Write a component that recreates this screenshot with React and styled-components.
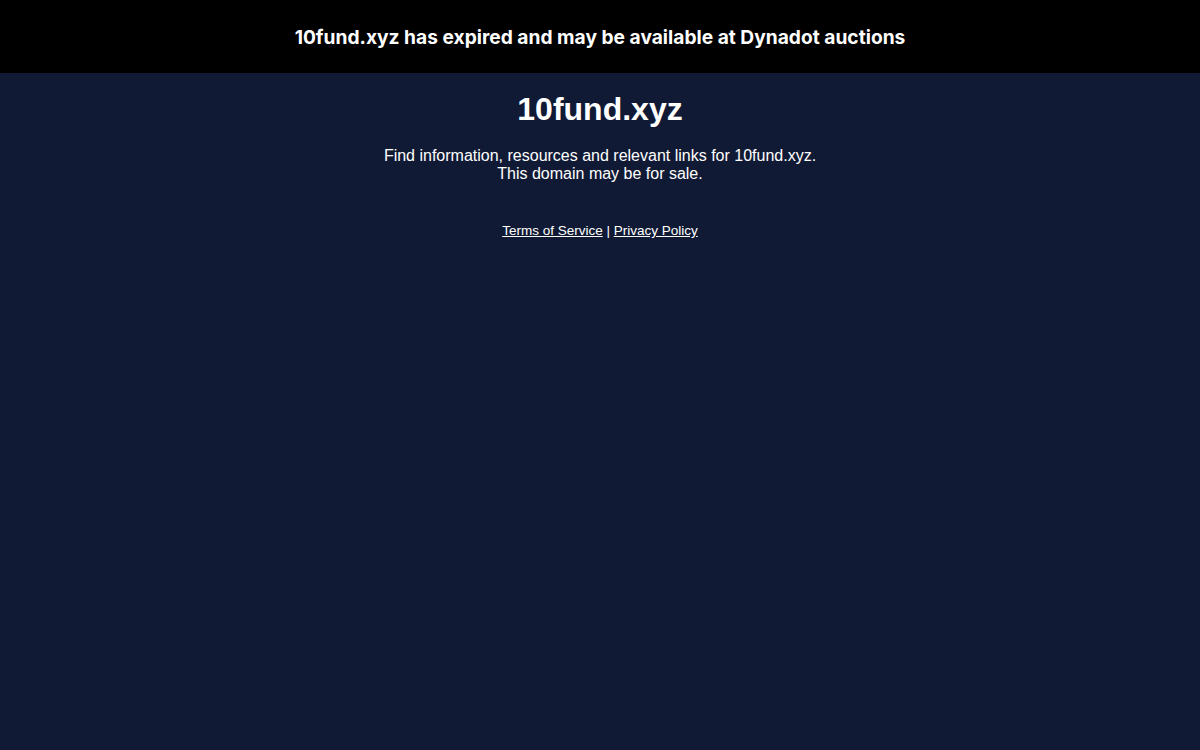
import styled, { createGlobalStyle } from "styled-components"

const GlobalStyle = createGlobalStyle`
  html, body {
    margin: 0;
    padding: 0;
    height: 100%;
    background: #111a35;
  }
  #root {
    min-height: 100vh;
  }
`

const Page = styled.div`
  min-height: 100vh;
  background: #111a35;
  color: #fff;
  font-family: "Liberation Sans", Arial, sans-serif;
  text-align: center;
`

const Banner = styled.header`
  height: 73px;
  padding-top: 1px;
  box-sizing: border-box;
  background: #000;
  display: flex;
  align-items: center;
  justify-content: center;
  font-family: Inter, "Liberation Sans", sans-serif;
  font-weight: 700;
  font-size: 19.2px;
`

const Content = styled.main`
  display: flex;
  flex-direction: column;
  align-items: center;
  padding-top: 16px;
`

const Title = styled.h1`
  margin: 0;
  font-size: 32px;
  line-height: 40px;
  font-weight: 700;
`

const Lead = styled.p`
  margin: 18px 0 0;
  font-size: 16px;
  line-height: 18px;
`

const Footer = styled.div`
  margin-top: 40px;
  font-size: 13.5px;
  line-height: 16px;

  a {
    color: #fff;
    text-decoration: underline;
  }
`

const App = () => {
  return (
    <Page>
      <GlobalStyle />
      <Banner>10fund.xyz has expired and may be available at Dynadot auctions</Banner>
      <Content>
        <Title>10fund.xyz</Title>
        <Lead>
          Find information, resources and relevant links for 10fund.xyz.
          <br />
          This domain may be for sale.
        </Lead>
        <Footer>
          <a href="#">Terms of Service</a> | <a href="#">Privacy Policy</a>
        </Footer>
      </Content>
    </Page>
  )
}

export default App
